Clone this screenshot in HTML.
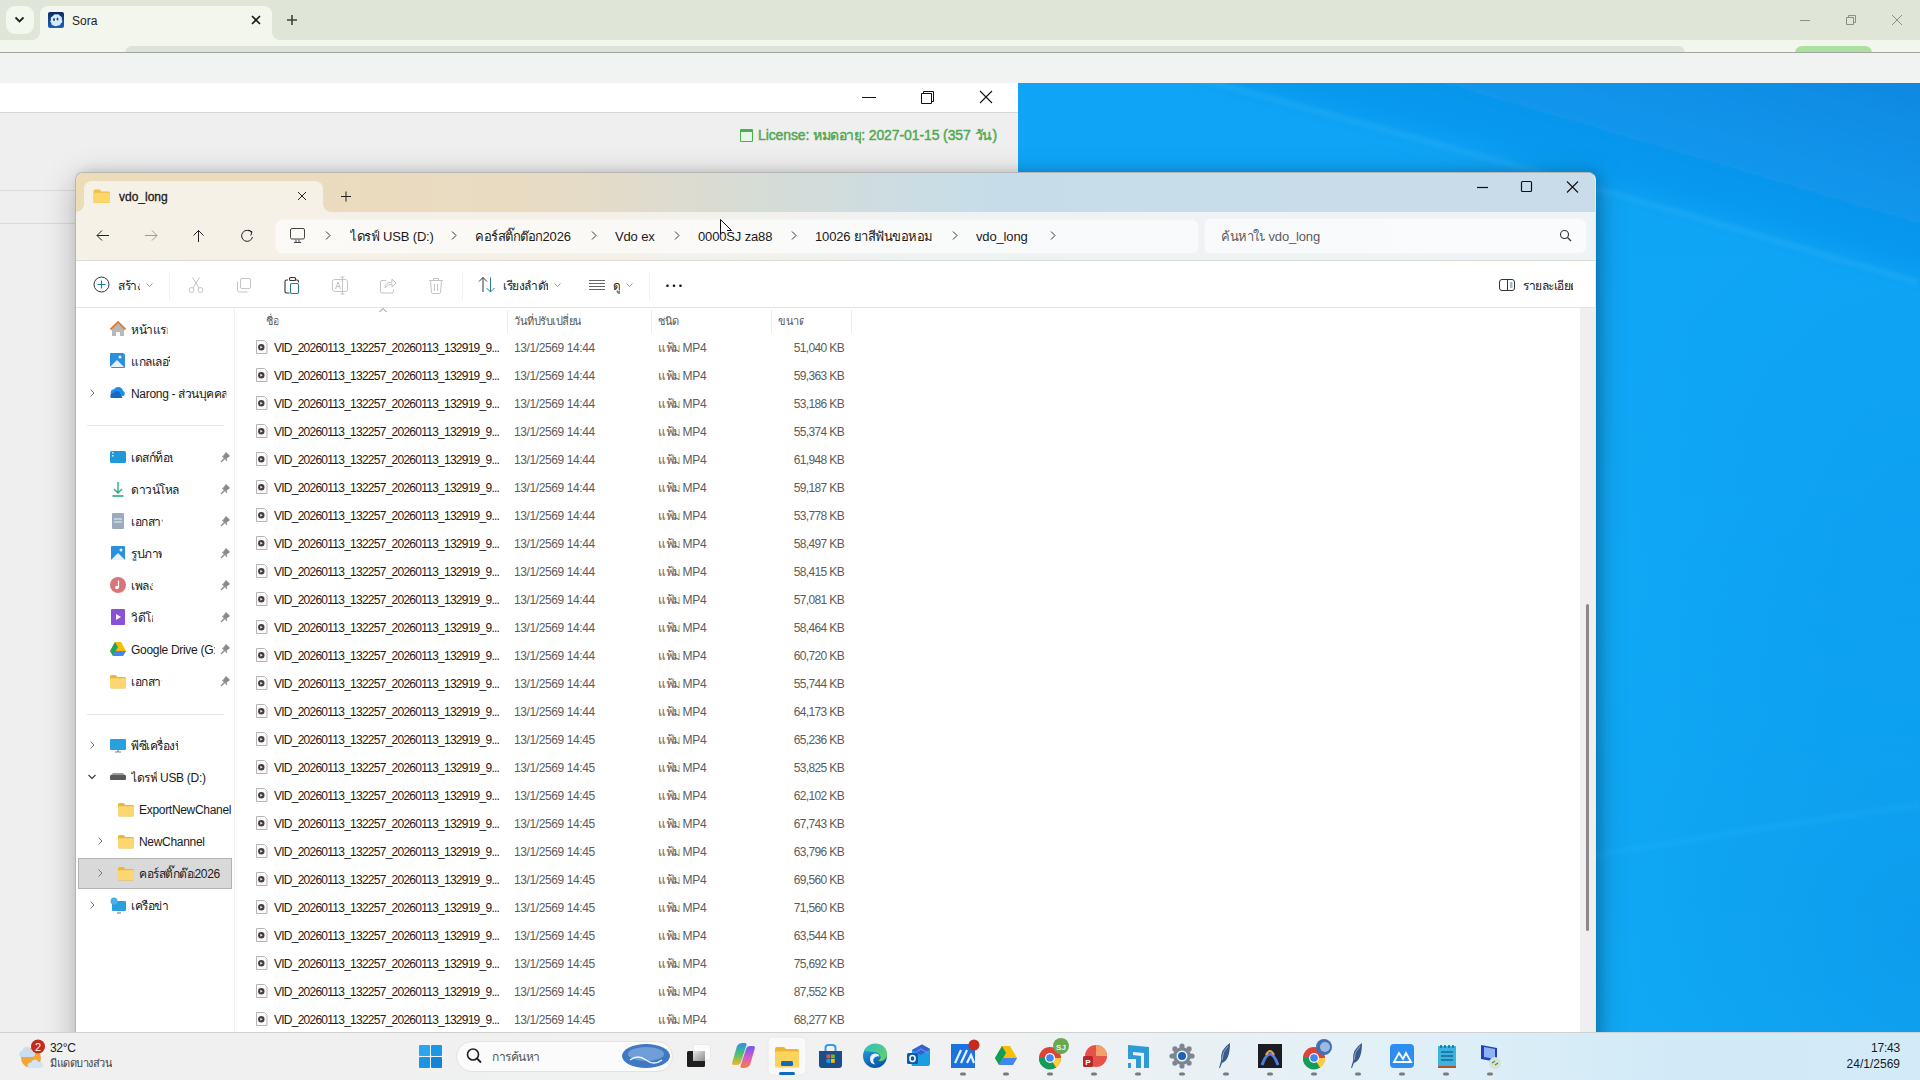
<!DOCTYPE html><html><head><meta charset="utf-8"><style>
*{box-sizing:border-box}
html,body{margin:0;padding:0}
body{width:1920px;height:1080px;position:relative;overflow:hidden;font-family:"Liberation Sans",sans-serif;background:#f0f0f0;color:#1a1a1a}
.a{position:absolute}
svg{position:absolute;overflow:visible}
.th{display:inline-block;white-space:nowrap;letter-spacing:-0.5px;clip-path:inset(-8px 0 -8px 0)}
</style></head><body><div class="a" style="left:0;top:0;width:1920px;height:52px;background:#f2f6ec"></div>
<div class="a" style="left:0;top:0;width:40px;height:40px;background:#dfe5d7;border-radius:0 0 8px 0"></div>
<div class="a" style="left:272px;top:0;width:1648px;height:40px;background:#dfe5d7;border-radius:0 0 0 8px"></div>
<div class="a" style="left:40px;top:0;width:232px;height:6px;background:#dfe5d7"></div>
<div class="a" style="left:40px;top:6px;width:232px;height:12px;background:#dfe5d7"></div>
<div class="a" style="left:125px;top:46px;width:1560px;height:7px;background:#dde3d8;border-radius:8px 8px 0 0"></div>
<div class="a" style="left:1795px;top:46px;width:77px;height:7px;background:#ade09f;border-radius:8px 8px 0 0"></div>
<div class="a" style="left:0;top:52px;width:1920px;height:1px;background:#9ea69e"></div>
<div class="a" style="left:0;top:53px;width:1920px;height:30px;background:#f1f2f2"></div>
<div class="a" style="left:6px;top:6px;width:28px;height:28px;background:#f3f8ee;border-radius:9px"></div>
<svg style="left:0;top:0" width="40" height="40"><path d="M15.5 17.5 L19.5 21.5 L23.5 17.5" fill="none" stroke="#222" stroke-width="1.8"/></svg>
<div class="a" style="left:40px;top:6px;width:232px;height:40px;background:#f2f6ec;border-radius:8px 8px 0 0"></div>
<svg style="left:48px;top:12px" width="16" height="16"><defs><linearGradient id="si" x1="0" y1="0" x2="0" y2="1"><stop offset="0" stop-color="#0b2a66"/><stop offset="1" stop-color="#2160b5"/></linearGradient></defs><rect x="0" y="0" width="16" height="16" rx="2" fill="url(#si)"/><path d="M3 8 q-1-3 2-4 q1-2.5 3.5-1.5 q2.5-1 3.5 1.5 q2.5 1 1.8 3.5 q1.5 2.5-1 4 q-0.5 2.5-3 2 q-2 1.5-4 0 q-2.5 0-2.5-2.5 q-2-1.5-0.3-3z" fill="#d6eafb"/><ellipse cx="6" cy="7.5" rx="1" ry="1.5" fill="#2a4a7a"/><ellipse cx="9.5" cy="7" rx="1" ry="1.5" fill="#2a4a7a"/></svg>
<div class="a" style="left:72px;top:15px;font-size:12px;line-height:12px;color:#222;white-space:nowrap;">Sora</div>
<svg style="left:0;top:0" width="300" height="40"><path d="M252 16 L260 24 M260 16 L252 24" stroke="#1a1a1a" stroke-width="1.6"/><path d="M287 20 H297 M292 15 V25" stroke="#3a463a" stroke-width="1.6"/></svg>
<svg style="left:1780px;top:0" width="140" height="40"><path d="M20 20.5 H30" stroke="#8a8f88" stroke-width="1"/><path d="M66.5 17.5 h7 v7 h-7 z M68.5 17.5 v-2 h7 v7 h-2" fill="none" stroke="#8a8f88" stroke-width="1"/><path d="M112 15 L122 25 M122 15 L112 25" stroke="#8a8f88" stroke-width="1"/></svg>
<div class="a" style="left:0;top:83px;width:1018px;height:29px;background:#fff"></div>
<div class="a" style="left:0;top:112px;width:1018px;height:1px;background:#d6d6d6"></div>
<div class="a" style="left:0;top:113px;width:1018px;height:919px;background:#efefef"></div>
<svg style="left:0;top:83px" width="1018" height="29"><path d="M862 14.5 H876" stroke="#111" stroke-width="1"/><path d="M921.5 10.5 h10 v10 h-10 z M923.5 10.5 v-2 h10 v10 h-2" fill="none" stroke="#111" stroke-width="1"/><path d="M980 8 L992 20 M992 8 L980 20" stroke="#111" stroke-width="1.1"/></svg>
<div class="a" style="left:740px;top:129px;width:13px;height:13px;border:1.5px solid #4caf50;border-top-width:3px;border-radius:1px;background:#e8f5e9"></div>
<div class="a" style="left:758px;top:128px;font-size:14px;line-height:14px;color:#52a852;white-space:nowrap;-webkit-text-stroke:0.45px #52a852;letter-spacing:-0.1px">License: <span class="th" style="width:48px">หมดอายุ</span>: 2027-01-15 (357 <span class="th" style="width:18px">วัน</span>)</div>
<div class="a" style="left:0;top:190px;width:80px;height:1px;background:#dadada"></div>
<div class="a" style="left:0;top:223px;width:80px;height:1px;background:#dadada"></div>
<svg style="left:1018px;top:83px;overflow:hidden" width="902" height="949"><defs><linearGradient id="wg" x1="0" y1="0" x2="0" y2="1"><stop offset="0" stop-color="#0fa4f5"/><stop offset="0.5" stop-color="#0fa8f6"/><stop offset="1" stop-color="#11aef7"/></linearGradient><linearGradient id="wd" x1="0.2" y1="0.9" x2="1" y2="0"><stop offset="0" stop-color="#0b8ee8" stop-opacity="0"/><stop offset="0.45" stop-color="#0b8ee8" stop-opacity="0.55"/><stop offset="1" stop-color="#0a7cd7" stop-opacity="1"/></linearGradient><radialGradient id="wr2" cx="1" cy="0.9" r="0.5"><stop offset="0" stop-color="#0b92e8" stop-opacity="0.6"/><stop offset="1" stop-color="#0b92e8" stop-opacity="0"/></radialGradient><radialGradient id="wr3" cx="1" cy="0.45" r="0.35"><stop offset="0" stop-color="#0b94ea" stop-opacity="0.35"/><stop offset="1" stop-color="#0b94ea" stop-opacity="0"/></radialGradient><filter id="bl" x="-10%" y="-50%" width="120%" height="200%"><feGaussianBlur stdDeviation="2.5"/></filter><filter id="bl2" x="-20%" y="-20%" width="140%" height="140%"><feGaussianBlur stdDeviation="10"/></filter></defs><rect width="902" height="949" fill="url(#wg)"/><rect width="902" height="949" fill="url(#wr2)"/><rect width="902" height="949" fill="url(#wr3)"/><path d="M150 -60 L1000 -60 L1000 222 L700 135 L450 64 L200 0z" fill="url(#wd)" filter="url(#bl2)"/><path d="M150 -12.3 L180 -4.3 L210 3.8 L240 11.9 L270 20.0 L300 28.2 L330 36.4 L360 44.7 L390 52.9 L420 61.3 L450 69.6 L480 78.0 L510 86.5 L540 94.9 L570 103.4 L600 112.0 L630 120.6 L660 129.2 L690 137.8 L720 146.5 L750 155.2 L780 164.0 L810 172.8 L840 181.6 L870 190.5 L900 199.4" fill="none" stroke="#30b4f8" stroke-width="3.5" opacity="0.55" filter="url(#bl)"/><path d="M560 775 Q760 742 902 722" fill="none" stroke="#2cbaf9" stroke-width="4" opacity="0.3" filter="url(#bl)"/></svg>
<div class="a" style="left:75px;top:172px;width:1521px;height:900px;background:#fff;border:1px solid #b5b5b5;border-right-color:#d6eef8;border-radius:8px 8px 0 0;overflow:hidden;box-shadow:0 8px 32px rgba(0,0,0,0.26), 5px 0 12px rgba(0,0,0,0.14)">
<div class="a" style="left:0;top:0;width:1520px;height:39px;background:linear-gradient(90deg,#eddcb8 0%,#e9dbc3 30%,#d6dcd6 45%,#c6dde9 60%,#cadcea 100%)"></div>
<div class="a" style="left:0;top:39px;width:1520px;height:48px;background:linear-gradient(90deg,#f6f1e6 0%,#f4f0e8 35%,#eef2f2 55%,#eef3f7 100%)"></div>
<div class="a" style="left:8px;top:8px;width:239px;height:40px;background:#f6f1e7;border-radius:8px 8px 0 0"></div>
</div>
<div class="a" style="left:76px;top:204px;width:8px;height:8px;background:radial-gradient(circle at 0 0, rgba(0,0,0,0) 7.5px, #f6f1e7 8.2px)"></div>
<div class="a" style="left:323px;top:204px;width:8px;height:8px;background:radial-gradient(circle at 100% 0, rgba(0,0,0,0) 7.5px, #f6f1e7 8.2px)"></div>
<svg style="left:0;top:0" width="1920" height="1080"><path d="M93.5 191 q0-1.5 1.5-1.5 h4.5 l2 2 h7 q1.5 0 1.5 1.5 v8.5 q0 1.5-1.5 1.5 h-13.5 q-1.5 0-1.5-1.5z" fill="#f0c040"/><path d="M93.5 194 q0-1.2 1.2-1.2 h14.1 q1.2 0 1.2 1.2 v7.5 q0 1.2-1.2 1.2 h-14.1 q-1.2 0-1.2-1.2z" fill="#fbd66b"/><path d="M298 192 L306 200 M306 192 L298 200" stroke="#222" stroke-width="1"/><path d="M341 196.5 H351 M346 191.5 V201.5" stroke="#222" stroke-width="1"/><path d="M1477 187.5 H1488" stroke="#111" stroke-width="1.2"/><rect x="1521.5" y="181.5" width="10" height="10" rx="1" fill="none" stroke="#111" stroke-width="1.2"/><path d="M1567 181.5 L1578 192.5 M1578 181.5 L1567 192.5" stroke="#111" stroke-width="1.1"/><path d="M97 235.5 H109 M102 230.5 L97 235.5 L102 240.5" fill="none" stroke="#222" stroke-width="1"/><path d="M145 235.5 H157 M152 230.5 L157 235.5 L152 240.5" fill="none" stroke="#9a9a9a" stroke-width="1"/><path d="M198.5 242 V230.5 M193.5 235.5 L198.5 230.5 L203.5 235.5" fill="none" stroke="#222" stroke-width="1"/><path d="M251.5 232.5 A5.5 5.5 0 1 0 252.5 237" fill="none" stroke="#222" stroke-width="1"/><path d="M248.5 230 L252 231.8 L250.8 235.5" fill="none" stroke="#222" stroke-width="1"/></svg>
<div class="a" style="left:119px;top:191px;font-size:12px;line-height:12px;color:#1a1a1a;white-space:nowrap;-webkit-text-stroke:0.3px #1a1a1a">vdo_long</div>
<div class="a" style="left:276px;top:220px;width:922px;height:33px;background:rgba(255,255,255,0.62);border-radius:6px;box-shadow:0 0 3px rgba(255,255,255,0.6)"></div>
<div class="a" style="left:1205px;top:219px;width:381px;height:34px;background:rgba(255,255,255,0.62);border-radius:6px;box-shadow:0 0 3px rgba(255,255,255,0.6)"></div>
<div class="a" style="left:76px;top:260px;width:1520px;height:1px;background:#dcdcd6"></div>
<svg style="left:0;top:0" width="1920" height="300"><rect x="290.5" y="228.5" width="14" height="10.5" rx="1.5" fill="none" stroke="#444" stroke-width="1"/><path d="M294 242.5 H301 M296 239.5 v3 M299 239.5 v3" stroke="#444" stroke-width="1"/><path d="M326 231.5 L330 235.5 L326 239.5" fill="none" stroke="#333" stroke-width="1"/><path d="M452 231.5 L456 235.5 L452 239.5" fill="none" stroke="#333" stroke-width="1"/><path d="M592 231.5 L596 235.5 L592 239.5" fill="none" stroke="#333" stroke-width="1"/><path d="M675 231.5 L679 235.5 L675 239.5" fill="none" stroke="#333" stroke-width="1"/><path d="M792 231.5 L796 235.5 L792 239.5" fill="none" stroke="#333" stroke-width="1"/><path d="M953 231.5 L957 235.5 L953 239.5" fill="none" stroke="#333" stroke-width="1"/><path d="M1051 231.5 L1055 235.5 L1051 239.5" fill="none" stroke="#333" stroke-width="1"/><circle cx="1564.5" cy="234.5" r="4" fill="none" stroke="#333" stroke-width="1.1"/><path d="M1567.5 237.5 L1571 241" stroke="#333" stroke-width="1.2"/></svg>
<div class="a" style="left:350px;top:230px;font-size:13px;line-height:13px;color:#1a1a1a;white-space:nowrap;letter-spacing:-0.15px"><span class="th" style="width:29.5px">ไดรฟ์</span> USB (D:)</div>
<div class="a" style="left:475px;top:230px;font-size:13px;line-height:13px;color:#1a1a1a;white-space:nowrap;letter-spacing:-0.15px"><span class="th" style="width:67.5px">คอร์สติ๊กต๊อก</span>2026</div>
<div class="a" style="left:615px;top:230px;font-size:13px;line-height:13px;color:#1a1a1a;white-space:nowrap;letter-spacing:-0.15px">Vdo ex</div>
<div class="a" style="left:698px;top:230px;font-size:13px;line-height:13px;color:#1a1a1a;white-space:nowrap;letter-spacing:-0.15px">0000SJ za88</div>
<div class="a" style="left:815px;top:230px;font-size:13px;line-height:13px;color:#1a1a1a;white-space:nowrap;letter-spacing:-0.15px">10026 <span class="th" style="width:90px">ยาสีฟันขอหอม</span></div>
<div class="a" style="left:976px;top:230px;font-size:13px;line-height:13px;color:#1a1a1a;white-space:nowrap;letter-spacing:-0.15px">vdo_long</div>
<div class="a" style="left:1221px;top:230px;font-size:13px;line-height:13px;color:#5d5d5d;white-space:nowrap;letter-spacing:-0.15px"><span class="th" style="width:44px">ค้นหาใน</span> vdo_long</div>
<svg style="left:0;top:0" width="1920" height="320"><circle cx="101.5" cy="284.5" r="7.5" fill="none" stroke="#333" stroke-width="1"/><path d="M97.5 284.5 H105.5 M101.5 280.5 V288.5" stroke="#1f7fa8" stroke-width="1.2"/><path d="M146.5 283.5 L149.5 286.5 L152.5 283.5" fill="none" stroke="#999" stroke-width="1"/><path d="M169.5 272 V300 M462.5 272 V300 M649.5 272 V300" stroke="#f1f1f1" stroke-width="1"/><g fill="none" stroke="#c4c4c4" stroke-width="1"><circle cx="191.5" cy="290" r="2.5"/><circle cx="200.5" cy="290" r="2.5"/><path d="M193 288 L199.5 277.5 M199 288 L192.5 277.5"/></g><g fill="none" stroke="#c4c4c4" stroke-width="1"><rect x="240.5" y="278.5" width="10" height="10" rx="1.5"/><path d="M237.5 281.5 v8.5 q0 2 2 2 h8"/></g><g fill="none" stroke-width="1.1"><path d="M288 280 h-1.5 q-1.5 0-1.5 1.5 v10 q0 1.5 1.5 1.5 h3" stroke="#333"/><rect x="289.5" y="277.5" width="6" height="3" rx="1" stroke="#333"/><path d="M295.5 280 h1.5 q1.5 0 1.5 1.5 v1" stroke="#333"/><rect x="290.5" y="283.5" width="8" height="10" rx="1.5" stroke="#2a7a96"/></g><g fill="none" stroke="#c4c4c4" stroke-width="1"><rect x="332.5" y="279.5" width="15" height="12" rx="2"/><path d="M335.5 289 L338 282 L340.5 289 M336.5 286.5 h3"/><path d="M342.5 277 V294 M340.5 277 h4 M340.5 294 h4" stroke="#c4c4c4"/></g><g fill="none" stroke="#c4c4c4" stroke-width="1"><path d="M386 280.5 h-4 q-1.5 0-1.5 1.5 v9.5 q0 1.5 1.5 1.5 h10 q1.5 0 1.5-1.5 v-2"/><path d="M385 288 q0-6 7-6 v-3 l4 4 l-4 4 v-3 q-4 0-7 4z"/></g><g fill="none" stroke="#c4c4c4" stroke-width="1"><path d="M429 280.5 h14 M433.5 280.5 v-2 h5 v2"/><path d="M430.5 281 l1 11.5 q0.2 1 1.2 1 h6.6 q1 0 1.2-1 l1-11.5"/><path d="M434.5 284 v7 M437.5 284 v7"/></g><path d="M483 292 V277.5 M479 281.5 L483 277.5 L487 281.5" fill="none" stroke="#333" stroke-width="1"/><path d="M490.5 277.5 V292 M486.5 288 L490.5 292 L494.5 288" fill="none" stroke="#2a7a96" stroke-width="1"/><path d="M554.5 283.5 L557.5 286.5 L560.5 283.5" fill="none" stroke="#999" stroke-width="1"/><path d="M589 280.5 H605 M589 283.5 H605 M589 286.5 H605 M589 289.5 H605" stroke="#555" stroke-width="0.9"/><path d="M626.5 283.5 L629.5 286.5 L632.5 283.5" fill="none" stroke="#999" stroke-width="1"/><circle cx="667.5" cy="285.8" r="1.3" fill="#111"/><circle cx="674" cy="285.8" r="1.3" fill="#111"/><circle cx="680.5" cy="285.8" r="1.3" fill="#111"/><g fill="none" stroke="#333" stroke-width="1"><rect x="1499.5" y="279.5" width="15" height="11" rx="2.5"/><path d="M1507.5 279.5 V290.5"/><path d="M1510 283 h2.5 M1510 285 h2.5 M1510 287 h2.5" stroke="#2a7a96"/></g></svg>
<div class="a" style="left:118px;top:280px;font-size:12px;line-height:12px;color:#1a1a1a;white-space:nowrap;"><span class="th" style="width:22px">สร้าง</span></div>
<div class="a" style="left:503px;top:280px;font-size:12px;line-height:12px;color:#1a1a1a;white-space:nowrap;"><span class="th" style="width:45px">เรียงลำดับ</span></div>
<div class="a" style="left:613px;top:280px;font-size:12px;line-height:12px;color:#1a1a1a;white-space:nowrap;"><span class="th" style="width:7px">ดู</span></div>
<div class="a" style="left:1523px;top:280px;font-size:12px;line-height:12px;color:#1a1a1a;white-space:nowrap;"><span class="th" style="width:50px">รายละเอียด</span></div>
<div class="a" style="left:76px;top:307px;width:1520px;height:1px;background:#e3e3e3"></div>
<div class="a" style="left:234px;top:308px;width:1px;height:724px;background:#f1f1f1"></div>
<div class="a" style="left:78px;top:858px;width:154px;height:31px;background:#d9d9d9;border:1px solid #b3b3b3"></div>
<div class="a" style="left:87px;top:425px;width:137px;height:1px;background:#e5e5e5"></div>
<div class="a" style="left:87px;top:714px;width:137px;height:1px;background:#e5e5e5"></div>
<svg style="left:0;top:0" width="240" height="1032"><path d="M112 329 L118 323 L124 329 V336 H120 V332 H116 V336 H112z" fill="#b8b8b8"/><path d="M110.5 329.5 L118 322 L125.5 329.5" fill="none" stroke="#d97b35" stroke-width="1.8"/><rect x="111" y="354" width="14" height="14" rx="1" fill="#3a8ed8"/><rect x="110" y="353" width="14" height="14" rx="1" fill="#2b8fe0"/><path d="M110 367 L117 360 L124 367z" fill="#e8f1fb"/><circle cx="120" cy="357" r="1.5" fill="#e8f1fb"/><path d="M113 396 a3.5 3.5 0 0 1 1-6.8 a5 5 0 0 1 9 1.5 a3 3 0 0 1 0.5 5.3z" fill="#1f8fe8"/><path d="M111 398 a3 3 0 0 1 2.5-5 a4 4 0 0 1 6-1 l3 6z" fill="#1668c8"/><path d="M90.5 389.5 L94 393 L90.5 396.5" fill="none" stroke="#777" stroke-width="1"/><rect x="110" y="451" width="16" height="12" rx="1.5" fill="#1f9ad6"/><rect x="112" y="452" width="1.5" height="1.5" fill="#cfefff"/><rect x="112" y="455" width="1.5" height="1.5" fill="#cfefff"/><path d="M221 462 L224.5 458.5" stroke="#8a8a8a" stroke-width="1.2"/><path d="M223 456 L226 452 L230 456 L226 459z" fill="#8a8a8a"/><path d="M222.5 456 L227 460.5" stroke="#8a8a8a" stroke-width="1.3"/><path d="M118 482 V493 M114 489 L118 493 L122 489" fill="none" stroke="#2ea88a" stroke-width="1.4"/><path d="M112.5 496 H123.5" stroke="#2ea88a" stroke-width="1.6"/><path d="M221 494 L224.5 490.5" stroke="#8a8a8a" stroke-width="1.2"/><path d="M223 488 L226 484 L230 488 L226 491z" fill="#8a8a8a"/><path d="M222.5 488 L227 492.5" stroke="#8a8a8a" stroke-width="1.3"/><rect x="112" y="513" width="12" height="16" rx="1" fill="#9aabbf"/><path d="M114 519 H122 M114 522 H122" stroke="#eef3f8" stroke-width="1.2"/><path d="M221 526 L224.5 522.5" stroke="#8a8a8a" stroke-width="1.2"/><path d="M223 520 L226 516 L230 520 L226 523z" fill="#8a8a8a"/><path d="M222.5 520 L227 524.5" stroke="#8a8a8a" stroke-width="1.3"/><rect x="111" y="546" width="14" height="14" rx="1" fill="#2b8fe0"/><path d="M111 560 L118 553 L125 560z" fill="#e8f1fb"/><circle cx="121" cy="550" r="1.5" fill="#e8f1fb"/><path d="M221 558 L224.5 554.5" stroke="#8a8a8a" stroke-width="1.2"/><path d="M223 552 L226 548 L230 552 L226 555z" fill="#8a8a8a"/><path d="M222.5 552 L227 556.5" stroke="#8a8a8a" stroke-width="1.3"/><circle cx="118" cy="585" r="8" fill="#d9757a"/><path d="M118.5 580.5 V587.5" stroke="#fff" stroke-width="1.2"/><circle cx="117" cy="587.5" r="1.8" fill="#fff"/><path d="M221 590 L224.5 586.5" stroke="#8a8a8a" stroke-width="1.2"/><path d="M223 584 L226 580 L230 584 L226 587z" fill="#8a8a8a"/><path d="M222.5 584 L227 588.5" stroke="#8a8a8a" stroke-width="1.3"/><rect x="111" y="609" width="14" height="16" rx="1" fill="#8b4fd8"/><path d="M116 614 L121 617 L116 620z" fill="#fff"/><path d="M221 622 L224.5 618.5" stroke="#8a8a8a" stroke-width="1.2"/><path d="M223 616 L226 612 L230 616 L226 619z" fill="#8a8a8a"/><path d="M222.5 616 L227 620.5" stroke="#8a8a8a" stroke-width="1.3"/><path d="M115 642 H121 L126 651 L123 656 H113 L110 651z" fill="#fbbc04"/><path d="M115 642 L110 651 L113 656 L118 647z" fill="#1fa463"/><path d="M113 656 H123 L126 651 H115.5z" fill="#4285f4"/><path d="M221 654 L224.5 650.5" stroke="#8a8a8a" stroke-width="1.2"/><path d="M223 648 L226 644 L230 648 L226 651z" fill="#8a8a8a"/><path d="M222.5 648 L227 652.5" stroke="#8a8a8a" stroke-width="1.3"/><path d="M110 676.5 q0-1.5 1.5-1.5 h4 l2 2 h7 q1.5 0 1.5 1.5 v8.5 q0 1.5-1.5 1.5 h-13 q-1.5 0-1.5-1.5z" fill="#e9b73c"/><path d="M110 679.5 q0-1.2 1.2-1.2 h13.6 q1.2 0 1.2 1.2 v7 q0 1.5-1.5 1.5 h-13 q-1.5 0-1.5-1.5z" fill="#fcd770"/><path d="M221 686 L224.5 682.5" stroke="#8a8a8a" stroke-width="1.2"/><path d="M223 680 L226 676 L230 680 L226 683z" fill="#8a8a8a"/><path d="M222.5 680 L227 684.5" stroke="#8a8a8a" stroke-width="1.3"/><rect x="110" y="739" width="16" height="11" rx="1" fill="#28a0dc"/><path d="M115 752 H121 M118 750 V752" stroke="#6a8aa0" stroke-width="1.2"/><path d="M90.5 741.5 L94 745 L90.5 748.5" fill="none" stroke="#777" stroke-width="1"/><rect x="110" y="775" width="16" height="5" rx="1" fill="#5a5a5a"/><path d="M111 775 L113 773 H123 L125 775" fill="#9a9a9a"/><path d="M88.5 775 L92 778.5 L95.5 775" fill="none" stroke="#333" stroke-width="1.1"/><path d="M118 804.5 q0-1.5 1.5-1.5 h4 l2 2 h7 q1.5 0 1.5 1.5 v8.5 q0 1.5-1.5 1.5 h-13 q-1.5 0-1.5-1.5z" fill="#e9b73c"/><path d="M118 807.5 q0-1.2 1.2-1.2 h13.6 q1.2 0 1.2 1.2 v7 q0 1.5-1.5 1.5 h-13 q-1.5 0-1.5-1.5z" fill="#fcd770"/><path d="M118 836.5 q0-1.5 1.5-1.5 h4 l2 2 h7 q1.5 0 1.5 1.5 v8.5 q0 1.5-1.5 1.5 h-13 q-1.5 0-1.5-1.5z" fill="#e9b73c"/><path d="M118 839.5 q0-1.2 1.2-1.2 h13.6 q1.2 0 1.2 1.2 v7 q0 1.5-1.5 1.5 h-13 q-1.5 0-1.5-1.5z" fill="#fcd770"/><path d="M98.5 837.5 L102 841 L98.5 844.5" fill="none" stroke="#777" stroke-width="1"/><path d="M118 868.5 q0-1.5 1.5-1.5 h4 l2 2 h7 q1.5 0 1.5 1.5 v8.5 q0 1.5-1.5 1.5 h-13 q-1.5 0-1.5-1.5z" fill="#e9b73c"/><path d="M118 871.5 q0-1.2 1.2-1.2 h13.6 q1.2 0 1.2 1.2 v7 q0 1.5-1.5 1.5 h-13 q-1.5 0-1.5-1.5z" fill="#fcd770"/><path d="M98.5 869.5 L102 873 L98.5 876.5" fill="none" stroke="#777" stroke-width="1"/><rect x="112" y="901" width="14" height="10" rx="1" fill="#28a0dc"/><circle cx="114" cy="901" r="3.5" fill="#4bb0e8"/><path d="M117 913 H121" stroke="#6a8aa0" stroke-width="1.2"/><path d="M90.5 901.5 L94 905 L90.5 908.5" fill="none" stroke="#777" stroke-width="1"/></svg>
<div class="a" style="left:131px;top:319px;width:101px;height:18px;overflow:hidden;font-size:12px;line-height:16px;padding-top:3px;color:#1a1a1a;white-space:nowrap;letter-spacing:-0.3px"><span class="th" style="width:36.5px">หน้าแรก</span></div>
<div class="a" style="left:131px;top:351px;width:101px;height:18px;overflow:hidden;font-size:12px;line-height:16px;padding-top:3px;color:#1a1a1a;white-space:nowrap;letter-spacing:-0.3px"><span class="th" style="width:39px">แกลเลอรี</span></div>
<div class="a" style="left:131px;top:383px;width:101px;height:18px;overflow:hidden;font-size:12px;line-height:16px;padding-top:3px;color:#1a1a1a;white-space:nowrap;letter-spacing:-0.3px">Narong - <span class="th" style="width:48px">ส่วนบุคคล</span></div>
<div class="a" style="left:131px;top:447px;width:84px;height:18px;overflow:hidden;font-size:12px;line-height:16px;padding-top:3px;color:#1a1a1a;white-space:nowrap;letter-spacing:-0.3px"><span class="th" style="width:42px">เดสก์ท็อป</span></div>
<div class="a" style="left:131px;top:479px;width:84px;height:18px;overflow:hidden;font-size:12px;line-height:16px;padding-top:3px;color:#1a1a1a;white-space:nowrap;letter-spacing:-0.3px"><span class="th" style="width:48px">ดาวน์โหลด</span></div>
<div class="a" style="left:131px;top:511px;width:84px;height:18px;overflow:hidden;font-size:12px;line-height:16px;padding-top:3px;color:#1a1a1a;white-space:nowrap;letter-spacing:-0.3px"><span class="th" style="width:31.5px">เอกสาร</span></div>
<div class="a" style="left:131px;top:543px;width:84px;height:18px;overflow:hidden;font-size:12px;line-height:16px;padding-top:3px;color:#1a1a1a;white-space:nowrap;letter-spacing:-0.3px"><span class="th" style="width:31px">รูปภาพ</span></div>
<div class="a" style="left:131px;top:575px;width:84px;height:18px;overflow:hidden;font-size:12px;line-height:16px;padding-top:3px;color:#1a1a1a;white-space:nowrap;letter-spacing:-0.3px"><span class="th" style="width:21.6px">เพลง</span></div>
<div class="a" style="left:131px;top:607px;width:84px;height:18px;overflow:hidden;font-size:12px;line-height:16px;padding-top:3px;color:#1a1a1a;white-space:nowrap;letter-spacing:-0.3px"><span class="th" style="width:22px">วิดีโอ</span></div>
<div class="a" style="left:131px;top:639px;width:84px;height:18px;overflow:hidden;font-size:12px;line-height:16px;padding-top:3px;color:#1a1a1a;white-space:nowrap;letter-spacing:-0.3px">Google Drive (G:</div>
<div class="a" style="left:131px;top:671px;width:84px;height:18px;overflow:hidden;font-size:12px;line-height:16px;padding-top:3px;color:#1a1a1a;white-space:nowrap;letter-spacing:-0.3px"><span class="th" style="width:31px">เอกสาร</span></div>
<div class="a" style="left:131px;top:735px;width:101px;height:18px;overflow:hidden;font-size:12px;line-height:16px;padding-top:3px;color:#1a1a1a;white-space:nowrap;letter-spacing:-0.3px"><span class="th" style="width:47px">พีซีเครื่องนี้</span></div>
<div class="a" style="left:131px;top:767px;width:101px;height:18px;overflow:hidden;font-size:12px;line-height:16px;padding-top:3px;color:#1a1a1a;white-space:nowrap;letter-spacing:-0.3px"><span class="th" style="width:26px">ไดรฟ์</span> USB (D:)</div>
<div class="a" style="left:139px;top:799px;width:93px;height:18px;overflow:hidden;font-size:12px;line-height:16px;padding-top:3px;color:#1a1a1a;white-space:nowrap;letter-spacing:-0.3px">ExportNewChanel</div>
<div class="a" style="left:139px;top:831px;width:93px;height:18px;overflow:hidden;font-size:12px;line-height:16px;padding-top:3px;color:#1a1a1a;white-space:nowrap;letter-spacing:-0.3px">NewChannel</div>
<div class="a" style="left:139px;top:863px;width:93px;height:18px;overflow:hidden;font-size:12px;line-height:16px;padding-top:3px;color:#1a1a1a;white-space:nowrap;letter-spacing:-0.3px"><span class="th" style="width:55.5px">คอร์สติ๊กต๊อก</span>2026</div>
<div class="a" style="left:131px;top:895px;width:101px;height:18px;overflow:hidden;font-size:12px;line-height:16px;padding-top:3px;color:#1a1a1a;white-space:nowrap;letter-spacing:-0.3px"><span class="th" style="width:37px">เครือข่าย</span></div>
<svg style="left:0;top:0" width="1920" height="340"><path d="M379.5 312 L383 308.5 L386.5 312" fill="none" stroke="#888" stroke-width="1"/><path d="M507.5 310 V333" stroke="#ececec" stroke-width="1"/><path d="M651.5 310 V333" stroke="#ececec" stroke-width="1"/><path d="M771.5 310 V333" stroke="#ececec" stroke-width="1"/><path d="M851.5 310 V333" stroke="#ececec" stroke-width="1"/></svg>
<div class="a" style="left:266px;top:316px;font-size:11px;line-height:11px;color:#5a5a5a;white-space:nowrap;letter-spacing:-0.3px"><span class="th" style="width:12.5px">ชื่อ</span></div>
<div class="a" style="left:514px;top:316px;font-size:11px;line-height:11px;color:#5a5a5a;white-space:nowrap;letter-spacing:-0.3px"><span class="th" style="width:67px">วันที่ปรับเปลี่ยน</span></div>
<div class="a" style="left:658px;top:316px;font-size:11px;line-height:11px;color:#5a5a5a;white-space:nowrap;letter-spacing:-0.3px"><span class="th" style="width:21px">ชนิด</span></div>
<div class="a" style="left:778px;top:316px;font-size:11px;line-height:11px;color:#5a5a5a;white-space:nowrap;letter-spacing:-0.3px"><span class="th" style="width:26px">ขนาด</span></div>
<svg style="left:0;top:0" width="900" height="1032"><path d="M256.5 340.5 h8 l2.5 2.5 v10.5 h-10.5z" fill="#fbfafa" stroke="#b5b5b5" stroke-width="1"/><circle cx="261.3" cy="347.3" r="3.2" fill="#4a3a3a"/><path d="M260.3 345.8 l2.4 1.5 l-2.4 1.5z" fill="#f4f0f0"/><path d="M256.5 368.5 h8 l2.5 2.5 v10.5 h-10.5z" fill="#fbfafa" stroke="#b5b5b5" stroke-width="1"/><circle cx="261.3" cy="375.3" r="3.2" fill="#4a3a3a"/><path d="M260.3 373.8 l2.4 1.5 l-2.4 1.5z" fill="#f4f0f0"/><path d="M256.5 396.5 h8 l2.5 2.5 v10.5 h-10.5z" fill="#fbfafa" stroke="#b5b5b5" stroke-width="1"/><circle cx="261.3" cy="403.3" r="3.2" fill="#4a3a3a"/><path d="M260.3 401.8 l2.4 1.5 l-2.4 1.5z" fill="#f4f0f0"/><path d="M256.5 424.5 h8 l2.5 2.5 v10.5 h-10.5z" fill="#fbfafa" stroke="#b5b5b5" stroke-width="1"/><circle cx="261.3" cy="431.3" r="3.2" fill="#4a3a3a"/><path d="M260.3 429.8 l2.4 1.5 l-2.4 1.5z" fill="#f4f0f0"/><path d="M256.5 452.5 h8 l2.5 2.5 v10.5 h-10.5z" fill="#fbfafa" stroke="#b5b5b5" stroke-width="1"/><circle cx="261.3" cy="459.3" r="3.2" fill="#4a3a3a"/><path d="M260.3 457.8 l2.4 1.5 l-2.4 1.5z" fill="#f4f0f0"/><path d="M256.5 480.5 h8 l2.5 2.5 v10.5 h-10.5z" fill="#fbfafa" stroke="#b5b5b5" stroke-width="1"/><circle cx="261.3" cy="487.3" r="3.2" fill="#4a3a3a"/><path d="M260.3 485.8 l2.4 1.5 l-2.4 1.5z" fill="#f4f0f0"/><path d="M256.5 508.5 h8 l2.5 2.5 v10.5 h-10.5z" fill="#fbfafa" stroke="#b5b5b5" stroke-width="1"/><circle cx="261.3" cy="515.3" r="3.2" fill="#4a3a3a"/><path d="M260.3 513.8 l2.4 1.5 l-2.4 1.5z" fill="#f4f0f0"/><path d="M256.5 536.5 h8 l2.5 2.5 v10.5 h-10.5z" fill="#fbfafa" stroke="#b5b5b5" stroke-width="1"/><circle cx="261.3" cy="543.3" r="3.2" fill="#4a3a3a"/><path d="M260.3 541.8 l2.4 1.5 l-2.4 1.5z" fill="#f4f0f0"/><path d="M256.5 564.5 h8 l2.5 2.5 v10.5 h-10.5z" fill="#fbfafa" stroke="#b5b5b5" stroke-width="1"/><circle cx="261.3" cy="571.3" r="3.2" fill="#4a3a3a"/><path d="M260.3 569.8 l2.4 1.5 l-2.4 1.5z" fill="#f4f0f0"/><path d="M256.5 592.5 h8 l2.5 2.5 v10.5 h-10.5z" fill="#fbfafa" stroke="#b5b5b5" stroke-width="1"/><circle cx="261.3" cy="599.3" r="3.2" fill="#4a3a3a"/><path d="M260.3 597.8 l2.4 1.5 l-2.4 1.5z" fill="#f4f0f0"/><path d="M256.5 620.5 h8 l2.5 2.5 v10.5 h-10.5z" fill="#fbfafa" stroke="#b5b5b5" stroke-width="1"/><circle cx="261.3" cy="627.3" r="3.2" fill="#4a3a3a"/><path d="M260.3 625.8 l2.4 1.5 l-2.4 1.5z" fill="#f4f0f0"/><path d="M256.5 648.5 h8 l2.5 2.5 v10.5 h-10.5z" fill="#fbfafa" stroke="#b5b5b5" stroke-width="1"/><circle cx="261.3" cy="655.3" r="3.2" fill="#4a3a3a"/><path d="M260.3 653.8 l2.4 1.5 l-2.4 1.5z" fill="#f4f0f0"/><path d="M256.5 676.5 h8 l2.5 2.5 v10.5 h-10.5z" fill="#fbfafa" stroke="#b5b5b5" stroke-width="1"/><circle cx="261.3" cy="683.3" r="3.2" fill="#4a3a3a"/><path d="M260.3 681.8 l2.4 1.5 l-2.4 1.5z" fill="#f4f0f0"/><path d="M256.5 704.5 h8 l2.5 2.5 v10.5 h-10.5z" fill="#fbfafa" stroke="#b5b5b5" stroke-width="1"/><circle cx="261.3" cy="711.3" r="3.2" fill="#4a3a3a"/><path d="M260.3 709.8 l2.4 1.5 l-2.4 1.5z" fill="#f4f0f0"/><path d="M256.5 732.5 h8 l2.5 2.5 v10.5 h-10.5z" fill="#fbfafa" stroke="#b5b5b5" stroke-width="1"/><circle cx="261.3" cy="739.3" r="3.2" fill="#4a3a3a"/><path d="M260.3 737.8 l2.4 1.5 l-2.4 1.5z" fill="#f4f0f0"/><path d="M256.5 760.5 h8 l2.5 2.5 v10.5 h-10.5z" fill="#fbfafa" stroke="#b5b5b5" stroke-width="1"/><circle cx="261.3" cy="767.3" r="3.2" fill="#4a3a3a"/><path d="M260.3 765.8 l2.4 1.5 l-2.4 1.5z" fill="#f4f0f0"/><path d="M256.5 788.5 h8 l2.5 2.5 v10.5 h-10.5z" fill="#fbfafa" stroke="#b5b5b5" stroke-width="1"/><circle cx="261.3" cy="795.3" r="3.2" fill="#4a3a3a"/><path d="M260.3 793.8 l2.4 1.5 l-2.4 1.5z" fill="#f4f0f0"/><path d="M256.5 816.5 h8 l2.5 2.5 v10.5 h-10.5z" fill="#fbfafa" stroke="#b5b5b5" stroke-width="1"/><circle cx="261.3" cy="823.3" r="3.2" fill="#4a3a3a"/><path d="M260.3 821.8 l2.4 1.5 l-2.4 1.5z" fill="#f4f0f0"/><path d="M256.5 844.5 h8 l2.5 2.5 v10.5 h-10.5z" fill="#fbfafa" stroke="#b5b5b5" stroke-width="1"/><circle cx="261.3" cy="851.3" r="3.2" fill="#4a3a3a"/><path d="M260.3 849.8 l2.4 1.5 l-2.4 1.5z" fill="#f4f0f0"/><path d="M256.5 872.5 h8 l2.5 2.5 v10.5 h-10.5z" fill="#fbfafa" stroke="#b5b5b5" stroke-width="1"/><circle cx="261.3" cy="879.3" r="3.2" fill="#4a3a3a"/><path d="M260.3 877.8 l2.4 1.5 l-2.4 1.5z" fill="#f4f0f0"/><path d="M256.5 900.5 h8 l2.5 2.5 v10.5 h-10.5z" fill="#fbfafa" stroke="#b5b5b5" stroke-width="1"/><circle cx="261.3" cy="907.3" r="3.2" fill="#4a3a3a"/><path d="M260.3 905.8 l2.4 1.5 l-2.4 1.5z" fill="#f4f0f0"/><path d="M256.5 928.5 h8 l2.5 2.5 v10.5 h-10.5z" fill="#fbfafa" stroke="#b5b5b5" stroke-width="1"/><circle cx="261.3" cy="935.3" r="3.2" fill="#4a3a3a"/><path d="M260.3 933.8 l2.4 1.5 l-2.4 1.5z" fill="#f4f0f0"/><path d="M256.5 956.5 h8 l2.5 2.5 v10.5 h-10.5z" fill="#fbfafa" stroke="#b5b5b5" stroke-width="1"/><circle cx="261.3" cy="963.3" r="3.2" fill="#4a3a3a"/><path d="M260.3 961.8 l2.4 1.5 l-2.4 1.5z" fill="#f4f0f0"/><path d="M256.5 984.5 h8 l2.5 2.5 v10.5 h-10.5z" fill="#fbfafa" stroke="#b5b5b5" stroke-width="1"/><circle cx="261.3" cy="991.3" r="3.2" fill="#4a3a3a"/><path d="M260.3 989.8 l2.4 1.5 l-2.4 1.5z" fill="#f4f0f0"/><path d="M256.5 1012.5 h8 l2.5 2.5 v10.5 h-10.5z" fill="#fbfafa" stroke="#b5b5b5" stroke-width="1"/><circle cx="261.3" cy="1019.3" r="3.2" fill="#4a3a3a"/><path d="M260.3 1017.8 l2.4 1.5 l-2.4 1.5z" fill="#f4f0f0"/></svg>
<div class="a" style="left:274px;top:342px;font-size:12px;line-height:12px;color:#1a1a1a;white-space:nowrap;letter-spacing:-0.75px">VID_20260113_132257_20260113_132919_9...</div>
<div class="a" style="left:514px;top:342px;font-size:12px;line-height:12px;color:#5c5c5c;white-space:nowrap;letter-spacing:-0.4px">13/1/2569 14:44</div>
<div class="a" style="left:658px;top:342px;font-size:12px;line-height:12px;color:#5c5c5c;white-space:nowrap;letter-spacing:-0.3px"><span class="th" style="width:21.5px">แฟ้ม</span> MP4</div>
<div class="a" style="left:744px;top:342px;width:100px;text-align:right;font-size:12px;line-height:12px;color:#5c5c5c;white-space:nowrap;letter-spacing:-0.65px">51,040 KB</div>
<div class="a" style="left:274px;top:370px;font-size:12px;line-height:12px;color:#1a1a1a;white-space:nowrap;letter-spacing:-0.75px">VID_20260113_132257_20260113_132919_9...</div>
<div class="a" style="left:514px;top:370px;font-size:12px;line-height:12px;color:#5c5c5c;white-space:nowrap;letter-spacing:-0.4px">13/1/2569 14:44</div>
<div class="a" style="left:658px;top:370px;font-size:12px;line-height:12px;color:#5c5c5c;white-space:nowrap;letter-spacing:-0.3px"><span class="th" style="width:21.5px">แฟ้ม</span> MP4</div>
<div class="a" style="left:744px;top:370px;width:100px;text-align:right;font-size:12px;line-height:12px;color:#5c5c5c;white-space:nowrap;letter-spacing:-0.65px">59,363 KB</div>
<div class="a" style="left:274px;top:398px;font-size:12px;line-height:12px;color:#1a1a1a;white-space:nowrap;letter-spacing:-0.75px">VID_20260113_132257_20260113_132919_9...</div>
<div class="a" style="left:514px;top:398px;font-size:12px;line-height:12px;color:#5c5c5c;white-space:nowrap;letter-spacing:-0.4px">13/1/2569 14:44</div>
<div class="a" style="left:658px;top:398px;font-size:12px;line-height:12px;color:#5c5c5c;white-space:nowrap;letter-spacing:-0.3px"><span class="th" style="width:21.5px">แฟ้ม</span> MP4</div>
<div class="a" style="left:744px;top:398px;width:100px;text-align:right;font-size:12px;line-height:12px;color:#5c5c5c;white-space:nowrap;letter-spacing:-0.65px">53,186 KB</div>
<div class="a" style="left:274px;top:426px;font-size:12px;line-height:12px;color:#1a1a1a;white-space:nowrap;letter-spacing:-0.75px">VID_20260113_132257_20260113_132919_9...</div>
<div class="a" style="left:514px;top:426px;font-size:12px;line-height:12px;color:#5c5c5c;white-space:nowrap;letter-spacing:-0.4px">13/1/2569 14:44</div>
<div class="a" style="left:658px;top:426px;font-size:12px;line-height:12px;color:#5c5c5c;white-space:nowrap;letter-spacing:-0.3px"><span class="th" style="width:21.5px">แฟ้ม</span> MP4</div>
<div class="a" style="left:744px;top:426px;width:100px;text-align:right;font-size:12px;line-height:12px;color:#5c5c5c;white-space:nowrap;letter-spacing:-0.65px">55,374 KB</div>
<div class="a" style="left:274px;top:454px;font-size:12px;line-height:12px;color:#1a1a1a;white-space:nowrap;letter-spacing:-0.75px">VID_20260113_132257_20260113_132919_9...</div>
<div class="a" style="left:514px;top:454px;font-size:12px;line-height:12px;color:#5c5c5c;white-space:nowrap;letter-spacing:-0.4px">13/1/2569 14:44</div>
<div class="a" style="left:658px;top:454px;font-size:12px;line-height:12px;color:#5c5c5c;white-space:nowrap;letter-spacing:-0.3px"><span class="th" style="width:21.5px">แฟ้ม</span> MP4</div>
<div class="a" style="left:744px;top:454px;width:100px;text-align:right;font-size:12px;line-height:12px;color:#5c5c5c;white-space:nowrap;letter-spacing:-0.65px">61,948 KB</div>
<div class="a" style="left:274px;top:482px;font-size:12px;line-height:12px;color:#1a1a1a;white-space:nowrap;letter-spacing:-0.75px">VID_20260113_132257_20260113_132919_9...</div>
<div class="a" style="left:514px;top:482px;font-size:12px;line-height:12px;color:#5c5c5c;white-space:nowrap;letter-spacing:-0.4px">13/1/2569 14:44</div>
<div class="a" style="left:658px;top:482px;font-size:12px;line-height:12px;color:#5c5c5c;white-space:nowrap;letter-spacing:-0.3px"><span class="th" style="width:21.5px">แฟ้ม</span> MP4</div>
<div class="a" style="left:744px;top:482px;width:100px;text-align:right;font-size:12px;line-height:12px;color:#5c5c5c;white-space:nowrap;letter-spacing:-0.65px">59,187 KB</div>
<div class="a" style="left:274px;top:510px;font-size:12px;line-height:12px;color:#1a1a1a;white-space:nowrap;letter-spacing:-0.75px">VID_20260113_132257_20260113_132919_9...</div>
<div class="a" style="left:514px;top:510px;font-size:12px;line-height:12px;color:#5c5c5c;white-space:nowrap;letter-spacing:-0.4px">13/1/2569 14:44</div>
<div class="a" style="left:658px;top:510px;font-size:12px;line-height:12px;color:#5c5c5c;white-space:nowrap;letter-spacing:-0.3px"><span class="th" style="width:21.5px">แฟ้ม</span> MP4</div>
<div class="a" style="left:744px;top:510px;width:100px;text-align:right;font-size:12px;line-height:12px;color:#5c5c5c;white-space:nowrap;letter-spacing:-0.65px">53,778 KB</div>
<div class="a" style="left:274px;top:538px;font-size:12px;line-height:12px;color:#1a1a1a;white-space:nowrap;letter-spacing:-0.75px">VID_20260113_132257_20260113_132919_9...</div>
<div class="a" style="left:514px;top:538px;font-size:12px;line-height:12px;color:#5c5c5c;white-space:nowrap;letter-spacing:-0.4px">13/1/2569 14:44</div>
<div class="a" style="left:658px;top:538px;font-size:12px;line-height:12px;color:#5c5c5c;white-space:nowrap;letter-spacing:-0.3px"><span class="th" style="width:21.5px">แฟ้ม</span> MP4</div>
<div class="a" style="left:744px;top:538px;width:100px;text-align:right;font-size:12px;line-height:12px;color:#5c5c5c;white-space:nowrap;letter-spacing:-0.65px">58,497 KB</div>
<div class="a" style="left:274px;top:566px;font-size:12px;line-height:12px;color:#1a1a1a;white-space:nowrap;letter-spacing:-0.75px">VID_20260113_132257_20260113_132919_9...</div>
<div class="a" style="left:514px;top:566px;font-size:12px;line-height:12px;color:#5c5c5c;white-space:nowrap;letter-spacing:-0.4px">13/1/2569 14:44</div>
<div class="a" style="left:658px;top:566px;font-size:12px;line-height:12px;color:#5c5c5c;white-space:nowrap;letter-spacing:-0.3px"><span class="th" style="width:21.5px">แฟ้ม</span> MP4</div>
<div class="a" style="left:744px;top:566px;width:100px;text-align:right;font-size:12px;line-height:12px;color:#5c5c5c;white-space:nowrap;letter-spacing:-0.65px">58,415 KB</div>
<div class="a" style="left:274px;top:594px;font-size:12px;line-height:12px;color:#1a1a1a;white-space:nowrap;letter-spacing:-0.75px">VID_20260113_132257_20260113_132919_9...</div>
<div class="a" style="left:514px;top:594px;font-size:12px;line-height:12px;color:#5c5c5c;white-space:nowrap;letter-spacing:-0.4px">13/1/2569 14:44</div>
<div class="a" style="left:658px;top:594px;font-size:12px;line-height:12px;color:#5c5c5c;white-space:nowrap;letter-spacing:-0.3px"><span class="th" style="width:21.5px">แฟ้ม</span> MP4</div>
<div class="a" style="left:744px;top:594px;width:100px;text-align:right;font-size:12px;line-height:12px;color:#5c5c5c;white-space:nowrap;letter-spacing:-0.65px">57,081 KB</div>
<div class="a" style="left:274px;top:622px;font-size:12px;line-height:12px;color:#1a1a1a;white-space:nowrap;letter-spacing:-0.75px">VID_20260113_132257_20260113_132919_9...</div>
<div class="a" style="left:514px;top:622px;font-size:12px;line-height:12px;color:#5c5c5c;white-space:nowrap;letter-spacing:-0.4px">13/1/2569 14:44</div>
<div class="a" style="left:658px;top:622px;font-size:12px;line-height:12px;color:#5c5c5c;white-space:nowrap;letter-spacing:-0.3px"><span class="th" style="width:21.5px">แฟ้ม</span> MP4</div>
<div class="a" style="left:744px;top:622px;width:100px;text-align:right;font-size:12px;line-height:12px;color:#5c5c5c;white-space:nowrap;letter-spacing:-0.65px">58,464 KB</div>
<div class="a" style="left:274px;top:650px;font-size:12px;line-height:12px;color:#1a1a1a;white-space:nowrap;letter-spacing:-0.75px">VID_20260113_132257_20260113_132919_9...</div>
<div class="a" style="left:514px;top:650px;font-size:12px;line-height:12px;color:#5c5c5c;white-space:nowrap;letter-spacing:-0.4px">13/1/2569 14:44</div>
<div class="a" style="left:658px;top:650px;font-size:12px;line-height:12px;color:#5c5c5c;white-space:nowrap;letter-spacing:-0.3px"><span class="th" style="width:21.5px">แฟ้ม</span> MP4</div>
<div class="a" style="left:744px;top:650px;width:100px;text-align:right;font-size:12px;line-height:12px;color:#5c5c5c;white-space:nowrap;letter-spacing:-0.65px">60,720 KB</div>
<div class="a" style="left:274px;top:678px;font-size:12px;line-height:12px;color:#1a1a1a;white-space:nowrap;letter-spacing:-0.75px">VID_20260113_132257_20260113_132919_9...</div>
<div class="a" style="left:514px;top:678px;font-size:12px;line-height:12px;color:#5c5c5c;white-space:nowrap;letter-spacing:-0.4px">13/1/2569 14:44</div>
<div class="a" style="left:658px;top:678px;font-size:12px;line-height:12px;color:#5c5c5c;white-space:nowrap;letter-spacing:-0.3px"><span class="th" style="width:21.5px">แฟ้ม</span> MP4</div>
<div class="a" style="left:744px;top:678px;width:100px;text-align:right;font-size:12px;line-height:12px;color:#5c5c5c;white-space:nowrap;letter-spacing:-0.65px">55,744 KB</div>
<div class="a" style="left:274px;top:706px;font-size:12px;line-height:12px;color:#1a1a1a;white-space:nowrap;letter-spacing:-0.75px">VID_20260113_132257_20260113_132919_9...</div>
<div class="a" style="left:514px;top:706px;font-size:12px;line-height:12px;color:#5c5c5c;white-space:nowrap;letter-spacing:-0.4px">13/1/2569 14:44</div>
<div class="a" style="left:658px;top:706px;font-size:12px;line-height:12px;color:#5c5c5c;white-space:nowrap;letter-spacing:-0.3px"><span class="th" style="width:21.5px">แฟ้ม</span> MP4</div>
<div class="a" style="left:744px;top:706px;width:100px;text-align:right;font-size:12px;line-height:12px;color:#5c5c5c;white-space:nowrap;letter-spacing:-0.65px">64,173 KB</div>
<div class="a" style="left:274px;top:734px;font-size:12px;line-height:12px;color:#1a1a1a;white-space:nowrap;letter-spacing:-0.75px">VID_20260113_132257_20260113_132919_9...</div>
<div class="a" style="left:514px;top:734px;font-size:12px;line-height:12px;color:#5c5c5c;white-space:nowrap;letter-spacing:-0.4px">13/1/2569 14:45</div>
<div class="a" style="left:658px;top:734px;font-size:12px;line-height:12px;color:#5c5c5c;white-space:nowrap;letter-spacing:-0.3px"><span class="th" style="width:21.5px">แฟ้ม</span> MP4</div>
<div class="a" style="left:744px;top:734px;width:100px;text-align:right;font-size:12px;line-height:12px;color:#5c5c5c;white-space:nowrap;letter-spacing:-0.65px">65,236 KB</div>
<div class="a" style="left:274px;top:762px;font-size:12px;line-height:12px;color:#1a1a1a;white-space:nowrap;letter-spacing:-0.75px">VID_20260113_132257_20260113_132919_9...</div>
<div class="a" style="left:514px;top:762px;font-size:12px;line-height:12px;color:#5c5c5c;white-space:nowrap;letter-spacing:-0.4px">13/1/2569 14:45</div>
<div class="a" style="left:658px;top:762px;font-size:12px;line-height:12px;color:#5c5c5c;white-space:nowrap;letter-spacing:-0.3px"><span class="th" style="width:21.5px">แฟ้ม</span> MP4</div>
<div class="a" style="left:744px;top:762px;width:100px;text-align:right;font-size:12px;line-height:12px;color:#5c5c5c;white-space:nowrap;letter-spacing:-0.65px">53,825 KB</div>
<div class="a" style="left:274px;top:790px;font-size:12px;line-height:12px;color:#1a1a1a;white-space:nowrap;letter-spacing:-0.75px">VID_20260113_132257_20260113_132919_9...</div>
<div class="a" style="left:514px;top:790px;font-size:12px;line-height:12px;color:#5c5c5c;white-space:nowrap;letter-spacing:-0.4px">13/1/2569 14:45</div>
<div class="a" style="left:658px;top:790px;font-size:12px;line-height:12px;color:#5c5c5c;white-space:nowrap;letter-spacing:-0.3px"><span class="th" style="width:21.5px">แฟ้ม</span> MP4</div>
<div class="a" style="left:744px;top:790px;width:100px;text-align:right;font-size:12px;line-height:12px;color:#5c5c5c;white-space:nowrap;letter-spacing:-0.65px">62,102 KB</div>
<div class="a" style="left:274px;top:818px;font-size:12px;line-height:12px;color:#1a1a1a;white-space:nowrap;letter-spacing:-0.75px">VID_20260113_132257_20260113_132919_9...</div>
<div class="a" style="left:514px;top:818px;font-size:12px;line-height:12px;color:#5c5c5c;white-space:nowrap;letter-spacing:-0.4px">13/1/2569 14:45</div>
<div class="a" style="left:658px;top:818px;font-size:12px;line-height:12px;color:#5c5c5c;white-space:nowrap;letter-spacing:-0.3px"><span class="th" style="width:21.5px">แฟ้ม</span> MP4</div>
<div class="a" style="left:744px;top:818px;width:100px;text-align:right;font-size:12px;line-height:12px;color:#5c5c5c;white-space:nowrap;letter-spacing:-0.65px">67,743 KB</div>
<div class="a" style="left:274px;top:846px;font-size:12px;line-height:12px;color:#1a1a1a;white-space:nowrap;letter-spacing:-0.75px">VID_20260113_132257_20260113_132919_9...</div>
<div class="a" style="left:514px;top:846px;font-size:12px;line-height:12px;color:#5c5c5c;white-space:nowrap;letter-spacing:-0.4px">13/1/2569 14:45</div>
<div class="a" style="left:658px;top:846px;font-size:12px;line-height:12px;color:#5c5c5c;white-space:nowrap;letter-spacing:-0.3px"><span class="th" style="width:21.5px">แฟ้ม</span> MP4</div>
<div class="a" style="left:744px;top:846px;width:100px;text-align:right;font-size:12px;line-height:12px;color:#5c5c5c;white-space:nowrap;letter-spacing:-0.65px">63,796 KB</div>
<div class="a" style="left:274px;top:874px;font-size:12px;line-height:12px;color:#1a1a1a;white-space:nowrap;letter-spacing:-0.75px">VID_20260113_132257_20260113_132919_9...</div>
<div class="a" style="left:514px;top:874px;font-size:12px;line-height:12px;color:#5c5c5c;white-space:nowrap;letter-spacing:-0.4px">13/1/2569 14:45</div>
<div class="a" style="left:658px;top:874px;font-size:12px;line-height:12px;color:#5c5c5c;white-space:nowrap;letter-spacing:-0.3px"><span class="th" style="width:21.5px">แฟ้ม</span> MP4</div>
<div class="a" style="left:744px;top:874px;width:100px;text-align:right;font-size:12px;line-height:12px;color:#5c5c5c;white-space:nowrap;letter-spacing:-0.65px">69,560 KB</div>
<div class="a" style="left:274px;top:902px;font-size:12px;line-height:12px;color:#1a1a1a;white-space:nowrap;letter-spacing:-0.75px">VID_20260113_132257_20260113_132919_9...</div>
<div class="a" style="left:514px;top:902px;font-size:12px;line-height:12px;color:#5c5c5c;white-space:nowrap;letter-spacing:-0.4px">13/1/2569 14:45</div>
<div class="a" style="left:658px;top:902px;font-size:12px;line-height:12px;color:#5c5c5c;white-space:nowrap;letter-spacing:-0.3px"><span class="th" style="width:21.5px">แฟ้ม</span> MP4</div>
<div class="a" style="left:744px;top:902px;width:100px;text-align:right;font-size:12px;line-height:12px;color:#5c5c5c;white-space:nowrap;letter-spacing:-0.65px">71,560 KB</div>
<div class="a" style="left:274px;top:930px;font-size:12px;line-height:12px;color:#1a1a1a;white-space:nowrap;letter-spacing:-0.75px">VID_20260113_132257_20260113_132919_9...</div>
<div class="a" style="left:514px;top:930px;font-size:12px;line-height:12px;color:#5c5c5c;white-space:nowrap;letter-spacing:-0.4px">13/1/2569 14:45</div>
<div class="a" style="left:658px;top:930px;font-size:12px;line-height:12px;color:#5c5c5c;white-space:nowrap;letter-spacing:-0.3px"><span class="th" style="width:21.5px">แฟ้ม</span> MP4</div>
<div class="a" style="left:744px;top:930px;width:100px;text-align:right;font-size:12px;line-height:12px;color:#5c5c5c;white-space:nowrap;letter-spacing:-0.65px">63,544 KB</div>
<div class="a" style="left:274px;top:958px;font-size:12px;line-height:12px;color:#1a1a1a;white-space:nowrap;letter-spacing:-0.75px">VID_20260113_132257_20260113_132919_9...</div>
<div class="a" style="left:514px;top:958px;font-size:12px;line-height:12px;color:#5c5c5c;white-space:nowrap;letter-spacing:-0.4px">13/1/2569 14:45</div>
<div class="a" style="left:658px;top:958px;font-size:12px;line-height:12px;color:#5c5c5c;white-space:nowrap;letter-spacing:-0.3px"><span class="th" style="width:21.5px">แฟ้ม</span> MP4</div>
<div class="a" style="left:744px;top:958px;width:100px;text-align:right;font-size:12px;line-height:12px;color:#5c5c5c;white-space:nowrap;letter-spacing:-0.65px">75,692 KB</div>
<div class="a" style="left:274px;top:986px;font-size:12px;line-height:12px;color:#1a1a1a;white-space:nowrap;letter-spacing:-0.75px">VID_20260113_132257_20260113_132919_9...</div>
<div class="a" style="left:514px;top:986px;font-size:12px;line-height:12px;color:#5c5c5c;white-space:nowrap;letter-spacing:-0.4px">13/1/2569 14:45</div>
<div class="a" style="left:658px;top:986px;font-size:12px;line-height:12px;color:#5c5c5c;white-space:nowrap;letter-spacing:-0.3px"><span class="th" style="width:21.5px">แฟ้ม</span> MP4</div>
<div class="a" style="left:744px;top:986px;width:100px;text-align:right;font-size:12px;line-height:12px;color:#5c5c5c;white-space:nowrap;letter-spacing:-0.65px">87,552 KB</div>
<div class="a" style="left:274px;top:1014px;font-size:12px;line-height:12px;color:#1a1a1a;white-space:nowrap;letter-spacing:-0.75px">VID_20260113_132257_20260113_132919_9...</div>
<div class="a" style="left:514px;top:1014px;font-size:12px;line-height:12px;color:#5c5c5c;white-space:nowrap;letter-spacing:-0.4px">13/1/2569 14:45</div>
<div class="a" style="left:658px;top:1014px;font-size:12px;line-height:12px;color:#5c5c5c;white-space:nowrap;letter-spacing:-0.3px"><span class="th" style="width:21.5px">แฟ้ม</span> MP4</div>
<div class="a" style="left:744px;top:1014px;width:100px;text-align:right;font-size:12px;line-height:12px;color:#5c5c5c;white-space:nowrap;letter-spacing:-0.65px">68,277 KB</div>
<div class="a" style="left:1580px;top:308px;width:15px;height:724px;background:#efefef"></div>
<div class="a" style="left:1586px;top:604px;width:3px;height:327px;background:#8a8a8a;border-radius:2px"></div>
<div class="a" style="left:0;top:1032px;width:1920px;height:48px;background:linear-gradient(90deg,#f0f0f0 0%,#f0f1f2 52%,#e2f0f7 72%,#d0eaf8 88%,#d3ebf8 100%);border-top:1px solid #d0d0d0"></div>
<div class="a" style="left:1800px;top:1042px;width:100px;text-align:right;font-size:12px;line-height:12px;color:#1a1a1a;letter-spacing:-0.2px">17:43</div>
<div class="a" style="left:1800px;top:1058px;width:100px;text-align:right;font-size:12px;line-height:12px;color:#1a1a1a">24/1/2569</div>
<svg style="left:0;top:1032px" width="1920" height="48"><circle cx="31" cy="26" r="10" fill="#f3a53a"/><path d="M20 25 a4 4 0 0 1 2.5-6.5 a4.5 4.5 0 0 1 8.5-1 a3.5 3.5 0 0 1 1 7.5z" fill="#c9dff0"/><path d="M29 36 a3 3 0 0 1 2-5.5 a4 4 0 0 1 7.5-0.5 a3 3 0 0 1 2.5 6z" fill="#d2e4f2"/><circle cx="38" cy="14.5" r="7" fill="#c42b1c"/><text x="38" y="18.5" font-family="Liberation Sans" font-size="11" fill="#fff" text-anchor="middle">2</text><rect x="419" y="13" width="11" height="11" rx="1" fill="#2aa5f0"/><rect x="431" y="13" width="11" height="11" rx="1" fill="#1b97e8"/><rect x="419" y="25" width="11" height="11" rx="1" fill="#1d93e4"/><rect x="431" y="25" width="11" height="11" rx="1" fill="#1283d6"/><rect x="456.5" y="9.5" width="216" height="30" rx="15" fill="#fbfbfb" stroke="#e2e2e2"/><circle cx="473" cy="22.5" r="5.5" fill="none" stroke="#222" stroke-width="1.6"/><path d="M477 26.5 L481 30.5" stroke="#222" stroke-width="1.8"/><ellipse cx="646" cy="24" rx="24" ry="12" fill="#3f79c4"/><ellipse cx="646" cy="22" rx="18" ry="7" fill="#8fb8e8" opacity="0.6"/><path d="M630 28 q8-6 16 0 q8 6 16 0" stroke="#e9f2fb" stroke-width="1.5" fill="none"/><defs><linearGradient id="tvg" x1="0" y1="0" x2="1" y2="1"><stop offset="0" stop-color="#e8e8e8"/><stop offset="1" stop-color="#8a8a8a"/></linearGradient></defs><rect x="693" y="12.5" width="17.5" height="15.5" rx="1.5" fill="#fbfbfb" stroke="#e6e6e6" stroke-width="0.8"/><rect x="687" y="19" width="18" height="16" rx="1.5" fill="#1e1e1e"/><rect x="693" y="19" width="12" height="10" fill="url(#tvg)"/><defs><linearGradient id="cpa" x1="0" y1="0" x2="0" y2="1"><stop offset="0" stop-color="#2a8ff0"/><stop offset="0.5" stop-color="#4cc46a"/><stop offset="1" stop-color="#f5b531"/></linearGradient><linearGradient id="cpb" x1="0" y1="0" x2="0" y2="1"><stop offset="0" stop-color="#6a5cf0"/><stop offset="0.5" stop-color="#d45ad0"/><stop offset="1" stop-color="#f5823a"/></linearGradient></defs><path d="M737 14 q2-3 5-3 h3 q2 0 1.5 2 l-5.5 17 q-1 3-4 3 h-3 q-2.5 0-1.8-2.5z" fill="url(#cpa)"/><path d="M750 33 q-2 3-5 3 h-3 q-2 0-1.5-2 l5.5-17 q1-3 4-3 h3 q2.5 0 1.8 2.5z" fill="url(#cpb)"/><rect x="768" y="5" width="38" height="38" rx="4" fill="#f9f9f9" stroke="#eaeaea"/><path d="M775 17 q0-2 2-2 h7 l2 2 h11 q2 0 2 2 v13 q0 2-2 2 h-20 q-2 0-2-2z" fill="#f0b431"/><path d="M775 21 q0-1.5 1.5-1.5 h21 q1.5 0 1.5 1.5 v13 q0 1.5-1.5 1.5 h-21 q-1.5 0-1.5-1.5z" fill="#fcd35c"/><rect x="781" y="29" width="12" height="5" rx="1.5" fill="#0f6cbd"/><rect x="779" y="40" width="16" height="3" rx="1.5" fill="#0f6cbd"/><path d="M819 19 h23 v14 q0 3-3 3 h-17 q-3 0-3-3z" fill="#1d4e8c"/><path d="M825.5 19 v-3 q0-3 3-3 h4 q3 0 3 3 v3" fill="none" stroke="#3a9ae0" stroke-width="2"/><rect x="826.5" y="22.5" width="3.8" height="3.8" fill="#f25022"/><rect x="831" y="22.5" width="3.8" height="3.8" fill="#7fba00"/><rect x="826.5" y="27" width="3.8" height="3.8" fill="#00a4ef"/><rect x="831" y="27" width="3.8" height="3.8" fill="#ffb900"/><defs><linearGradient id="edb" x1="0" y1="0" x2="0.3" y2="1"><stop offset="0" stop-color="#2fa8e8"/><stop offset="1" stop-color="#0b5aa8"/></linearGradient><linearGradient id="edg" x1="0" y1="0" x2="1" y2="1"><stop offset="0" stop-color="#2bc0c9"/><stop offset="1" stop-color="#6ad35a"/></linearGradient></defs><circle cx="875" cy="24" r="12" fill="url(#edb)"/><path d="M864 19 q4-8 12-7.5 q9 0.5 11 9 q0.5 5-3 7.5 q-3 2-6 0.5 q3-1 2.5-4 q-1-4-6-4.5 q-6-0.5-10.5-1z" fill="url(#edg)"/><path d="M870 27 q0-5 5-5.5 q4 0 4.5 3 q-4.5-1-6 2.5 q-1 3 2 5.5 q-5.5-0.5-5.5-5.5z" fill="#e9f4fa"/><path d="M912 18 l10-5.5 l8 4.5 v15 q0 2-2 2 h-15 q-1.5 0-1.5-1.5z" fill="#1b9de2"/><path d="M912 18 l10-5.5 l8 4.5 l-9 6z" fill="#3a5fd0"/><path d="M913 22 l8-5 l9 5" fill="none" stroke="#5b8ef0" stroke-width="1.2"/><rect x="907" y="21" width="11" height="11" rx="1.5" fill="#0e5aa8"/><ellipse cx="912.5" cy="26.5" rx="2.6" ry="3" fill="none" stroke="#fff" stroke-width="1.5"/><rect x="951" y="12" width="24" height="24" fill="#1a73e0"/><path d="M955 31 l6-13 M961 31 l6-13 M967 31 l4-8 l3 8" stroke="#e6f0fb" stroke-width="2.2" fill="none"/><circle cx="974" cy="13" r="5.5" fill="#c42b1c"/><path d="M1002 14 h8 l7 12 l-4 7 h-14 l-4-7z" fill="#fbbc04"/><path d="M1002 14 l-7 12 l4 7 l7-12z" fill="#0f9d58"/><path d="M999 33 h14 l4-7 h-14z" fill="#4285f4"/><path d="M1010 14 l7 12 h-8 l-3-5z" fill="#ea4335" opacity="0.0"/><circle cx="1050" cy="26" r="11" fill="#db4437"/><path d="M1050 26 L1039 26 A11 11 0 0 0 1056 35.5z" fill="#0f9d58"/><path d="M1050 26 L1056 35.5 A11 11 0 0 0 1061 26z" fill="#ffcd40"/><circle cx="1050" cy="26" r="5" fill="#fff"/><circle cx="1050" cy="26" r="3.8" fill="#4285f4"/><circle cx="1061" cy="14" r="8" fill="#6aa84f"/><text x="1061" y="17.5" font-family="Liberation Sans" font-size="8" font-weight="bold" fill="#eef" text-anchor="middle">SJ</text><circle cx="1096" cy="24" r="11" fill="#e6524a"/><path d="M1096 13 a11 11 0 0 1 11 11 h-11z" fill="#f5a06a"/><rect x="1083" y="24" width="10" height="11" rx="1.5" fill="#b7262b"/><text x="1088" y="33" font-family="Liberation Sans" font-size="8" font-weight="bold" fill="#fff" text-anchor="middle">P</text><path d="M1128 13 l21 2 v21 l-5 0 v-15 l-11-1 v3 l8 1 v12 h-5 v-9 l-8 0 v4 l3 0 v5 h-3 z" fill="#2f9ad6"/><circle cx="1182" cy="24" r="9" fill="#7c8692"/><circle cx="1192.0" cy="24.0" r="2.6" fill="#7c8692"/><circle cx="1189.1" cy="31.1" r="2.6" fill="#7c8692"/><circle cx="1182.0" cy="34.0" r="2.6" fill="#7c8692"/><circle cx="1174.9" cy="31.1" r="2.6" fill="#7c8692"/><circle cx="1172.0" cy="24.0" r="2.6" fill="#7c8692"/><circle cx="1174.9" cy="16.9" r="2.6" fill="#7c8692"/><circle cx="1182.0" cy="14.0" r="2.6" fill="#7c8692"/><circle cx="1189.1" cy="16.9" r="2.6" fill="#7c8692"/><circle cx="1182" cy="24" r="5.5" fill="#f0f4f6"/><circle cx="1182" cy="24" r="4" fill="#1e62b8"/><path d="M1230 11 q-10 6-9 18 l-2 7 l1 0 l2-5 q8-3 8-20z" fill="#3a5a8a"/><path d="M1228 14 q-6 6-6 14" stroke="#cfd9e6" stroke-width="0.6" fill="none"/><rect x="1258" y="12" width="24" height="24" fill="#1b1d22"/><path d="M1262 33 q8-22 16 0" fill="none" stroke="#4f7ee0" stroke-width="3"/><path d="M1266 23 q4-8 8 0" fill="none" stroke="#e8a05a" stroke-width="2"/><circle cx="1314" cy="26" r="11" fill="#db4437"/><path d="M1314 26 L1303 26 A11 11 0 0 0 1320 35.5z" fill="#0f9d58"/><path d="M1314 26 L1320 35.5 A11 11 0 0 0 1325 26z" fill="#ffcd40"/><circle cx="1314" cy="26" r="5" fill="#fff"/><circle cx="1314" cy="26" r="3.8" fill="#4285f4"/><circle cx="1324" cy="15" r="8" fill="#3f70b8"/><circle cx="1325" cy="15" r="5" fill="#c8dcf0" opacity="0.7"/><path d="M1362 11 q-10 6-9 18 l-2 7 l1 0 l2-5 q8-3 8-20z" fill="#3a5a8a"/><path d="M1360 14 q-6 6-6 14" stroke="#cfd9e6" stroke-width="0.6" fill="none"/><rect x="1390" y="12" width="24" height="24" rx="4" fill="#2e8ef0"/><path d="M1394 30 l5-9 l4 6 l3-6 l5 9z" fill="none" stroke="#fff" stroke-width="1.8"/><rect x="1438" y="14" width="18" height="22" fill="#3ab3e0"/><rect x="1438" y="34" width="18" height="2" fill="#b7501d"/><path d="M1441 20 h12 M1441 24 h12 M1441 28 h12" stroke="#1b6a90" stroke-width="1.5"/><path d="M1441 13 v3 M1445 13 v3 M1449 13 v3 M1453 13 v3" stroke="#1b6a90" stroke-width="1.5"/><path d="M1481 13 l16 3 v14 l-16-3z" fill="#1f3fbf"/><path d="M1484 15 l11 2 v10 l-11-2z" fill="#8fb3f0"/><circle cx="1495" cy="31" r="6" fill="#d8e0d8"/><path d="M1492 31 l3-2 M1498 31 l-3 2" stroke="#3a9a3a" stroke-width="1.2"/><rect x="960" y="40.5" width="6" height="3" rx="1.5" fill="#7a7a7a"/><rect x="1003" y="40.5" width="6" height="3" rx="1.5" fill="#7a7a7a"/><rect x="1047" y="40.5" width="6" height="3" rx="1.5" fill="#7a7a7a"/><rect x="1091" y="40.5" width="6" height="3" rx="1.5" fill="#7a7a7a"/><rect x="1135" y="40.5" width="6" height="3" rx="1.5" fill="#7a7a7a"/><rect x="1179" y="40.5" width="6" height="3" rx="1.5" fill="#7a7a7a"/><rect x="1223" y="40.5" width="6" height="3" rx="1.5" fill="#7a7a7a"/><rect x="1267" y="40.5" width="6" height="3" rx="1.5" fill="#7a7a7a"/><rect x="1311" y="40.5" width="6" height="3" rx="1.5" fill="#7a7a7a"/><rect x="1355" y="40.5" width="6" height="3" rx="1.5" fill="#7a7a7a"/><rect x="1399" y="40.5" width="6" height="3" rx="1.5" fill="#7a7a7a"/><rect x="1443" y="40.5" width="6" height="3" rx="1.5" fill="#7a7a7a"/><rect x="1487" y="40.5" width="6" height="3" rx="1.5" fill="#7a7a7a"/></svg>
<div class="a" style="left:50px;top:1042px;font-size:12px;line-height:12px;color:#1a1a1a;white-space:nowrap;letter-spacing:-0.3px">32°C</div>
<div class="a" style="left:50px;top:1058px;font-size:11px;line-height:11px;color:#444;white-space:nowrap;letter-spacing:-0.4px"><span class="th" style="width:62px">มีแดดบางส่วน</span></div>
<div class="a" style="left:492px;top:1051px;font-size:12px;line-height:12px;color:#555;white-space:nowrap;"><span class="th" style="width:51px">การค้นหา</span></div>
<svg style="left:715px;top:214px" width="30" height="30"><path d="M5.5 5.5 V20.5 M5.5 5.5 L16.5 16.5 L12 16.5" fill="none" stroke="#111" stroke-width="1"/></svg></body></html>
